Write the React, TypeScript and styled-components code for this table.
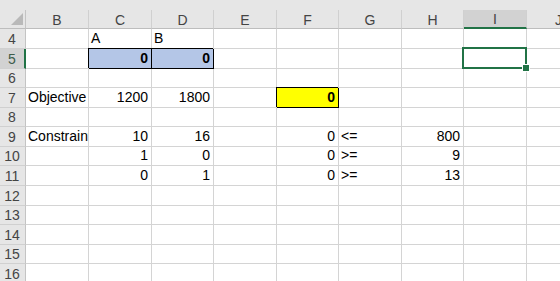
import React from "react";
import styled, { createGlobalStyle } from "styled-components";

type CellData = {
    text?: string,
    align?: "left" | "right",
    bold?: boolean,
    fill?: string,
    boxed?: boolean,
    selected?: boolean
}

const COLS = ["B", "C", "D", "E", "F", "G", "H", "I", "J"];
const ROW_HEIGHTS = [20, 20, 19, 20, 19, 20, 19, 20, 20, 19, 20, 19, 20];
const FIRST_ROW = 4;
const SELECTED_COL = "I";
const SELECTED_ROW = 5;

// sparse sheet content, keyed by cell address
const CELLS: Record<string, CellData> = {
    C4: { text: "A" },
    D4: { text: "B" },
    C5: { text: "0", align: "right", bold: true, fill: "#b4c6e7", boxed: true },
    D5: { text: "0", align: "right", bold: true, fill: "#b4c6e7", boxed: true },
    I5: { selected: true },
    B7: { text: "Objective" },
    C7: { text: "1200", align: "right" },
    D7: { text: "1800", align: "right" },
    F7: { text: "0", align: "right", bold: true, fill: "#ffff00", boxed: true },
    B9: { text: "Constraint" },
    C9: { text: "10", align: "right" },
    D9: { text: "16", align: "right" },
    F9: { text: "0", align: "right" },
    G9: { text: "<=" },
    H9: { text: "800", align: "right" },
    C10: { text: "1", align: "right" },
    D10: { text: "0", align: "right" },
    F10: { text: "0", align: "right" },
    G10: { text: ">=" },
    H10: { text: "9", align: "right" },
    C11: { text: "0", align: "right" },
    D11: { text: "1", align: "right" },
    F11: { text: "0", align: "right" },
    G11: { text: ">=" },
    H11: { text: "13", align: "right" },
};

const App = () => {
    const rows = ROW_HEIGHTS.map((_, i) => FIRST_ROW + i);

    return (
        <>
            <GlobalStyle />
            <Window>
                <Gap />
                <Sheet $rows={ROW_HEIGHTS}>
                    <Corner>
                        <svg width="14" height="14" viewBox="0 0 14 14">
                            <polygon points="1,13 13,13 13,1" fill="#b9b9b9" />
                        </svg>
                    </Corner>
                    {COLS.map((c) => (
                        <ColHeader key={c} $active={c === SELECTED_COL}>{c}</ColHeader>
                    ))}
                    {rows.map((r) => (
                        <React.Fragment key={r}>
                            <RowHeader $active={r === SELECTED_ROW}>{r}</RowHeader>
                            {COLS.map((c) => {
                                const cell = CELLS[c + r] || {};
                                return (
                                    <Cell
                                        key={c + r}
                                        $align={cell.align || "left"}
                                        $bold={!!cell.bold}
                                        $fill={cell.fill}
                                        $boxed={!!cell.boxed}
                                        $selected={!!cell.selected}
                                    >
                                        {cell.text}
                                        {cell.selected && (
                                            <Selection>
                                                <FillHandle />
                                            </Selection>
                                        )}
                                    </Cell>
                                );
                            })}
                        </React.Fragment>
                    ))}
                </Sheet>
            </Window>
        </>
    );
};

// STYLED COMPONENTS //
const GlobalStyle = createGlobalStyle`
    html, body {
        margin: 0;
        padding: 0;
        background: #fff;
    }
    body {
        font-family: "Liberation Sans", Arial, sans-serif;
    }
`;

const Window = styled.div`
    width: 560px;
    height: 281px;
    overflow: hidden;
    background: #fff;
`;

const Gap = styled.div`
    height: 10px;
    background: #e6e6e6;
`;

const Sheet = styled.div<{ $rows: number[] }>`
    display: grid;
    grid-template-columns: 26px 63px 63px 62px 63px 62px 63px 62px 63px 64px;
    grid-template-rows: 19px ${(p) => p.$rows.map((h) => h + "px").join(" ")};
    font-size: 14px;
`;

const Corner = styled.div`
    background: #e6e6e6;
    border-right: 1px solid #c4c4c4;
    border-bottom: 1px solid #bdbdbd;
    box-sizing: border-box;
    display: flex;
    align-items: flex-end;
    justify-content: flex-end;
    padding: 0 1px 2px 0;
`;

const ColHeader = styled.div<{ $active: boolean }>`
    background: ${(p) => (p.$active ? "#d2d2d2" : "#e6e6e6")};
    border-right: 1px solid #d0d0d0;
    border-bottom: ${(p) => (p.$active ? "2px solid #217346" : "1px solid #bdbdbd")};
    box-sizing: border-box;
    color: #444;
    font-family: "Liberation Sans", Arial, sans-serif;
    font-size: 14px;
    display: flex;
    align-items: center;
    justify-content: center;
    padding-top: 1px;
`;

const RowHeader = styled.div<{ $active: boolean }>`
    background: ${(p) => (p.$active ? "#d2d2d2" : "#e6e6e6")};
    border-right: ${(p) => (p.$active ? "2px solid #217346" : "1px solid #c4c4c4")};
    border-bottom: 1px solid #d0d0d0;
    box-sizing: border-box;
    color: ${(p) => (p.$active ? "#3d5c49" : "#444")};
    font-size: 14px;
    display: flex;
    align-items: flex-end;
    justify-content: center;
    padding-bottom: 1px;
    padding-right: ${(p) => (p.$active ? "0" : "1px")};
`;

const Cell = styled.div<{
    $align: "left" | "right",
    $bold: boolean,
    $fill?: string,
    $boxed: boolean,
    $selected: boolean
}>`
    position: ${(p) => (p.$selected ? "relative" : "static")};
    background: ${(p) => p.$fill || "#fff"};
    border-right: 1px solid ${(p) => (p.$boxed ? "#000" : "#d4d4d4")};
    border-bottom: 1px solid ${(p) => (p.$boxed ? "#000" : "#d4d4d4")};
    box-shadow: ${(p) => (p.$boxed ? "-1px -1px 0 0 #000" : "none")};
    z-index: ${(p) => (p.$boxed || p.$selected ? 2 : "auto")};
    box-sizing: border-box;
    color: #000;
    font-weight: ${(p) => (p.$bold ? 700 : 400)};
    white-space: nowrap;
    overflow: ${(p) => (p.$selected ? "visible" : "hidden")};
    display: flex;
    align-items: flex-end;
    justify-content: ${(p) => (p.$align === "right" ? "flex-end" : "flex-start")};
    padding: 0 3px 1px 2px;
    line-height: 17px;
`;

const Selection = styled.div`
    position: absolute;
    top: -2px;
    left: -2px;
    right: -1px;
    bottom: -1px;
    border: 2px solid #217346;
    pointer-events: none;
`;

const FillHandle = styled.div`
    position: absolute;
    right: -5px;
    bottom: -5px;
    width: 6px;
    height: 6px;
    background: #217346;
    border: 1px solid #fff;
`;

export default App;
